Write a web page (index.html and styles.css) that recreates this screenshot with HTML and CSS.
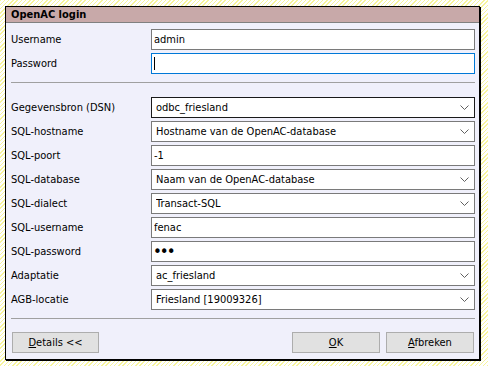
FILE: index.html
```html
<!DOCTYPE html>
<html lang="nl">
<head>
    <meta charset="UTF-8">
    <meta name="viewport" content="width=device-width, initial-scale=1.0">
    <title>OpenAC login</title>
    <link rel="stylesheet" href="styles.css">
</head>
<body>

    <div class="login-dialog">
        <div class="dialog-title">OpenAC login</div>

        <form class="dialog-body" id="loginForm">
            <div class="fields">
                <label for="username">Username</label>
                <input type="text" id="username" name="username" value="admin">

                <label for="password">Password</label>
                <input type="password" id="password" name="password" class="focused" autofocus>
            </div>

            <hr class="divider">

            <div class="fields">
                <label for="dsn">Gegevensbron (DSN)</label>
                <select id="dsn" name="dsn" class="active">
                    <option>odbc_friesland</option>
                </select>

                <label for="hostname">SQL-hostname</label>
                <select id="hostname" name="hostname">
                    <option>Hostname van de OpenAC-database</option>
                </select>

                <label for="poort">SQL-poort</label>
                <input type="text" id="poort" name="poort" value="-1">

                <label for="database">SQL-database</label>
                <select id="database" name="database">
                    <option>Naam van de OpenAC-database</option>
                </select>

                <label for="dialect">SQL-dialect</label>
                <select id="dialect" name="dialect">
                    <option>Transact-SQL</option>
                </select>

                <label for="sqluser">SQL-username</label>
                <input type="text" id="sqluser" name="sqluser" value="fenac">

                <label for="sqlpass">SQL-password</label>
                <input type="password" id="sqlpass" name="sqlpass" class="secret" value="abc">

                <label for="adaptatie">Adaptatie</label>
                <select id="adaptatie" name="adaptatie">
                    <option>ac_friesland</option>
                </select>

                <label for="agb">AGB-locatie</label>
                <select id="agb" name="agb">
                    <option>Friesland [19009326]</option>
                </select>
            </div>

            <hr class="divider divider-bottom">

            <div class="buttons">
                <button type="button" class="details"><u>D</u>etails &lt;&lt;</button>
                <span class="spacer"></span>
                <button type="submit"><u>O</u>K</button>
                <button type="button"><u>A</u>fbreken</button>
            </div>
        </form>
    </div>

</body>
</html>
```

FILE: styles.css
```css
body {
    margin: 0;
    height: 366px;
    font-family: "DejaVu Sans Condensed", "DejaVu Sans", "Liberation Sans", sans-serif;
    font-size: 11px;
    color: #000;
    background: repeating-linear-gradient(135deg, #f7f49c 0 1px, #ffffff 1px 3px);
    padding-top: 6px;
    box-sizing: border-box;
}

.login-dialog {
    margin-left: 5px;
    width: 475px;
    box-sizing: border-box;
    background-color: #f0f0fb;
    border: 1px solid #000;
    box-shadow: 1px 1px 0 #000;
}

.dialog-title {
    height: 15px;
    line-height: 15px;
    padding-left: 5px;
    font-weight: bold;
    background-color: #c8a9a9;
    border-bottom: 1px solid #808080;
}

.dialog-body {
    display: flex;
    flex-direction: column;
    padding: 6px 4px 6px 5px;
    margin: 0;
}

.fields {
    display: grid;
    grid-template-columns: 140px 1fr;
    row-gap: 3px;
}

label {
    align-self: center;
}

input,
select {
    height: 21px;
    box-sizing: border-box;
    margin: 0;
    font-family: inherit;
    font-size: 11px;
    color: #000;
    background-color: #fff;
    border: 1px solid #7a7a7a;
    border-radius: 0;
    outline: none;
}

input {
    padding: 0 2px;
}

input.secret {
    font-family: "DejaVu Sans", sans-serif;
    font-size: 15px;
    letter-spacing: -2px;
    padding-left: 1px;
}

select {
    appearance: none;
    -webkit-appearance: none;
    padding: 0 20px 0 4px;
    background-image: url("data:image/svg+xml,%3Csvg xmlns='http://www.w3.org/2000/svg' width='9' height='5'%3E%3Cpath d='M0.5 0.5l4 4 4-4' fill='none' stroke='%23606060'/%3E%3C/svg%3E");
    background-repeat: no-repeat;
    background-position: right 5px center;
}

select.active {
    border-color: #1a1a1a;
}

/* focus border + caret line, as in the screenshot */
input.focused {
    border-color: #0078d7;
    caret-color: #000;
    background-image: linear-gradient(#000, #000);
    background-repeat: no-repeat;
    background-size: 1px 13px;
    background-position: 2px center;
}

.divider {
    border: none;
    border-top: 1px solid #a0a0a0;
    margin: 8px 0 14px 0;
    height: 0;
}

.divider-bottom {
    margin-bottom: 13px;
}

.buttons {
    display: flex;
    gap: 6px;
    padding: 0 1px;
}

.spacer {
    flex: 1;
}

button {
    height: 21px;
    width: 88px;
    font-family: inherit;
    font-size: 11px;
    color: #000;
    background-color: #e1e1e1;
    border: 1px solid #adadad;
    padding: 0;
}

button.details {
    width: 87px;
}
```
